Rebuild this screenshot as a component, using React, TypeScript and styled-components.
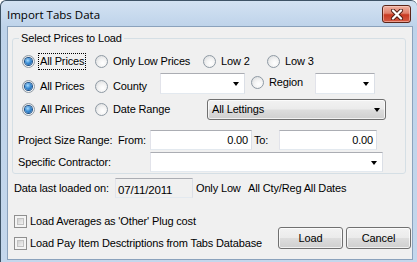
import React from "react";
import styled, { createGlobalStyle } from "styled-components";

const Global = createGlobalStyle`
  html, body { margin: 0; padding: 0; background: #fff; }
  body { font-family: "Liberation Sans", Arial, sans-serif; font-size: 11px; letter-spacing: -0.15px; color: #000; }
  * { box-sizing: border-box; }
`;

const Window = styled.div`
  width: 417px;
  height: 262px;
  display: flex;
  flex-direction: column;
  background: linear-gradient(#d3e2f2, #bed3ea 26px, #c4d7ec);
  border: 1px solid #3e5366;
  border-right: none;
  border-bottom: none;
  border-radius: 6px 6px 0 0;
  padding: 0 4px 2px 6px;
  overflow: hidden;
`;

const TitleBar = styled.div`
  height: 25px;
  display: flex;
  align-items: flex-start;
  justify-content: space-between;
`;

const Title = styled.div`
  font-family: "Open Sans", "Noto Sans", sans-serif;
  font-size: 11.5px;
  letter-spacing: 0;
  line-height: 16px;
  margin-top: 6px;
  color: #000;
`;

const CloseButton = styled.div`
  width: 29px;
  height: 18px;
  margin: 4px 2px 0 0;
  border: 1px solid #5a2519;
  border-radius: 3px;
  background: linear-gradient(#eeb1a2, #e0806b 45%, #c83a22 55%, #d55a44);
  box-shadow: inset 0 0 0 1px rgba(255, 220, 210, 0.5);
  display: flex;
  align-items: center;
  justify-content: center;
`;

const Client = styled.div`
  flex: 1;
  background: #f0f0f0;
  border: 1px solid #8ba2bc;
  display: flex;
  flex-direction: column;
`;

const Group = styled.fieldset`
  margin: 5px 0 0 4px;
  width: 394px;
  border: 1px solid #d5dfe5;
  border-radius: 3px;
  padding: 0 0 0 9px;
  display: flex;
  flex-direction: column;
  min-width: 0;
`;

const Legend = styled.legend`
  padding: 0 2px;
  margin-left: -3px;
  line-height: 13px;
  font-size: 11px;
`;

const Row = styled.div<{ $h: number; $mt: number; $indent?: number }>`
  display: flex;
  align-items: center;
  height: ${(p) => p.$h}px;
  margin-top: ${(p) => p.$mt}px;
  margin-left: ${(p) => p.$indent ?? 0}px;
`;

const Option = styled.div<{ $w?: number; $raise?: number }>`
  display: flex;
  align-items: center;
  width: ${(p) => (p.$w ? `${p.$w}px` : "auto")};
  flex: none;
  margin-bottom: ${(p) => (p.$raise ?? 0) * 2}px;
`;

const RadioCircle = styled.span<{ $on?: boolean }>`
  width: 13px;
  height: 13px;
  flex: none;
  border-radius: 50%;
  border: 1px solid #8f9aa4;
  background: radial-gradient(circle at 60% 65%, #ffffff 0%, #f4f4f4 40%, #d4d6d8 100%);
  display: flex;
  align-items: center;
  justify-content: center;
  &::after {
    content: "";
    display: ${(p) => (p.$on ? "block" : "none")};
    width: 7px;
    height: 7px;
    border-radius: 50%;
    background: radial-gradient(circle at 40% 35%, #a9dcff 0%, #3d8fd6 45%, #0e4f96 100%);
    box-shadow: 0 0 0 1px #1c4f86;
  }
`;

const OptionText = styled.span<{ $focus?: boolean }>`
  margin-left: 3px;
  padding: 1px 1px 2px;
  border: 1px ${(p) => (p.$focus ? "dotted #000" : "solid transparent")};
  white-space: nowrap;
  line-height: 12px;
`;

const Label = styled.span<{ $w?: number; $ml?: number }>`
  width: ${(p) => (p.$w ? `${p.$w}px` : "auto")};
  margin-left: ${(p) => p.$ml ?? 0}px;
  flex: none;
  white-space: nowrap;
`;

const Combo = styled.div<{ $w: number; $h?: number; $raise?: number; $mr?: number }>`
  width: ${(p) => p.$w}px;
  height: ${(p) => p.$h ?? 21}px;
  flex: none;
  background: #fff;
  border: 1px solid;
  border-color: #abadb3 #dbdfe6 #e3e9ef #e2e3ea;
  display: flex;
  align-items: center;
  justify-content: flex-end;
  padding-right: 5px;
  margin-bottom: ${(p) => (p.$raise ?? 0) * 2}px;
  margin-right: ${(p) => p.$mr ?? 0}px;
`;

const Arrow = styled.span`
  width: 0;
  height: 0;
  border-left: 3.5px solid transparent;
  border-right: 3.5px solid transparent;
  border-top: 4px solid #000;
  margin-top: 1px;
`;

const DropList = styled.div<{ $w: number }>`
  width: ${(p) => p.$w}px;
  height: 21px;
  flex: none;
  border: 1px solid #707070;
  border-radius: 3px;
  background: linear-gradient(#f2f2f2, #ebebeb 48%, #dddddd 52%, #cfcfcf);
  box-shadow: inset 0 0 0 1px rgba(255, 255, 255, 0.7);
  display: flex;
  align-items: center;
  justify-content: space-between;
  padding: 0 5px 0 4px;
`;

const TextBox = styled.div<{ $w: number; $grey?: boolean }>`
  width: ${(p) => p.$w}px;
  height: 20px;
  flex: none;
  background: ${(p) => (p.$grey ? "#f0f0f0" : "#fff")};
  border: 1px solid;
  border-color: #abadb3 #dbdfe6 #e3e9ef #e2e3ea;
  display: flex;
  align-items: center;
  justify-content: ${(p) => (p.$grey ? "flex-start" : "flex-end")};
  padding: ${(p) => (p.$grey ? "3px 0 0 2px" : "0 3px 0 0")};
  font-size: ${(p) => (p.$grey ? "11.5px" : "11px")};
`;

const InfoRow = styled.div`
  display: flex;
  align-items: center;
  height: 20px;
  margin: 4px 0 0 6px;
`;

const Bottom = styled.div`
  display: flex;
  justify-content: space-between;
`;

const CheckList = styled.div`
  display: flex;
  flex-direction: column;
  margin: 12px 0 0 6px;
`;

const CheckRow = styled.div`
  display: flex;
  align-items: center;
  height: 22px;
`;

const CheckBox = styled.span`
  width: 13px;
  height: 13px;
  flex: none;
  border: 1px solid #8f8f8f;
  background: #f4f4f4;
  padding: 2px;
  &::after {
    content: "";
    display: block;
    width: 100%;
    height: 100%;
    background: linear-gradient(135deg, #cfcfcf, #f2f2f2);
    border: 1px solid #c2c2c2;
    box-sizing: border-box;
  }
`;

const CheckText = styled.span`
  margin-left: 3px;
  white-space: nowrap;
`;

const Buttons = styled.div`
  display: flex;
  gap: 3px;
  margin: 29px 1px 0 0;
  align-self: flex-start;
`;

const Button = styled.div`
  width: 65px;
  height: 22px;
  border: 1px solid #707070;
  border-radius: 3px;
  background: linear-gradient(#f2f2f2, #ebebeb 48%, #dddddd 52%, #cfcfcf);
  box-shadow: inset 0 0 0 1px rgba(255, 255, 255, 0.7);
  display: flex;
  align-items: center;
  justify-content: center;
`;

function Radio({ on, label, w, focus, raise }: { on?: boolean; label: string; w?: number; focus?: boolean; raise?: number }) {
  return (
    <Option $w={w} $raise={raise}>
      <RadioCircle $on={on} />
      <OptionText $focus={focus}>{label}</OptionText>
    </Option>
  );
}

export default function App() {
  return (
    <>
      <Global />
      <Window>
        <TitleBar>
          <Title>Import Tabs Data</Title>
          <CloseButton>
            <svg width="14" height="11" viewBox="0 0 14 11">
              <path d="M3 1.5 L11 9.5 M11 1.5 L3 9.5" stroke="#4a1a12" strokeWidth="4" strokeLinecap="round" />
              <path d="M3 1.5 L11 9.5 M11 1.5 L3 9.5" stroke="#ffffff" strokeWidth="2.3" strokeLinecap="round" />
            </svg>
          </CloseButton>
        </TitleBar>
        <Client>
          <Group>
            <Legend>Select Prices to Load</Legend>
            <Row $h={22} $mt={5}>
              <Radio on focus label="All Prices" w={73} />
              <Radio label="Only Low Prices" w={108} />
              <Radio label="Low 2" w={64} />
              <Radio label="Low 3" />
            </Row>
            <Row $h={24} $mt={2}>
              <Radio on label="All Prices" w={73} />
              <Radio label="County" w={65} />
              <Combo $w={85} $raise={3} $mr={6}>
                <Arrow />
              </Combo>
              <Radio label="Region" w={64} raise={4} />
              <Combo $w={60} $raise={3}>
                <Arrow />
              </Combo>
            </Row>
            <Row $h={22} $mt={0}>
              <Radio on label="All Prices" w={73} />
              <Radio label="Date Range" w={112} />
              <DropList $w={179}>
                <span>All Lettings</span>
                <Arrow />
              </DropList>
            </Row>
            <Row $h={22} $mt={9} $indent={-4}>
              <Label $w={100}>Project Size Range:</Label>
              <Label $w={32}>From:</Label>
              <TextBox $w={102}>0.00</TextBox>
              <Label $w={25} $ml={2}>To:</Label>
              <TextBox $w={98}>0.00</TextBox>
            </Row>
            <Row $h={22} $mt={0} $indent={-4}>
              <Label $w={132}>Specific Contractor:</Label>
              <Combo $w={233} $h={20}>
                <Arrow />
              </Combo>
            </Row>
          </Group>
          <InfoRow>
            <Label $w={101}>Data last loaded on:</Label>
            <TextBox $w={78} $grey>
              07/11/2011
            </TextBox>
            <Label $w={52} $ml={3}>Only Low</Label>
            <Label>All Cty/Reg All Dates</Label>
          </InfoRow>
          <Bottom>
            <CheckList>
              <CheckRow>
                <CheckBox />
                <CheckText>Load Averages as 'Other' Plug cost</CheckText>
              </CheckRow>
              <CheckRow>
                <CheckBox />
                <CheckText>Load Pay Item Desctriptions from Tabs Database</CheckText>
              </CheckRow>
            </CheckList>
            <Buttons>
              <Button>Load</Button>
              <Button>Cancel</Button>
            </Buttons>
          </Bottom>
        </Client>
      </Window>
    </>
  );
}
